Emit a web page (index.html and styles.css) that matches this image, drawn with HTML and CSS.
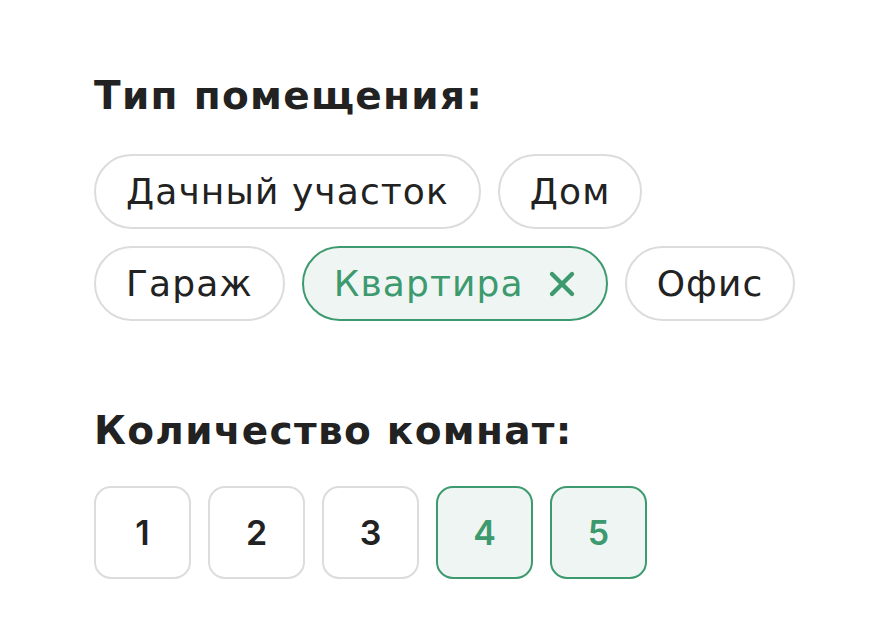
FILE: index.html
```html
<!DOCTYPE html>
<html lang="ru">
<head>
  <meta charset="UTF-8" />
  <meta name="viewport" content="width=device-width, initial-scale=1.0"/>
  <title>Фильтр</title>
  <link rel="stylesheet" href="styles.css">
</head>
<body>
  <div class="filter">
    <div class="group">
      <h2 class="group-title">Тип помещения:</h2>
      <div class="chips">
        <button class="chip">Дачный участок</button>
        <button class="chip">Дом</button>
        <button class="chip">Гараж</button>
        <button class="chip active">Квартира
          <svg class="chip-close" viewBox="0 0 28 28" width="28" height="28">
            <path d="M4 4 L24 24 M24 4 L4 24" stroke="currentColor" stroke-width="4.4" stroke-linecap="round" fill="none"/>
          </svg>
        </button>
        <button class="chip">Офис</button>
      </div>
    </div>
    <div class="group rooms">
      <h2 class="group-title">Количество комнат:</h2>
      <div class="boxes">
        <button class="box">1</button>
        <button class="box">2</button>
        <button class="box">3</button>
        <button class="box active">4</button>
        <button class="box active">5</button>
      </div>
    </div>
  </div>
</body>
</html>
```

FILE: styles.css
```css
* { box-sizing: border-box; }
html, body {
  margin: 0;
  background: #ffffff;
  color: #222222;
  font-family: "DejaVu Sans", Inter, sans-serif;
}
.filter {
  padding: 72px 0 0 94px;
}
.group-title {
  margin: 0 0 34px;
  font-size: 39px;
  font-weight: 700;
  line-height: 48px;
  letter-spacing: 1.3px;
  color: #222222;
}
.chips {
  display: flex;
  flex-wrap: wrap;
  gap: 17px;
  max-width: 720px;
}
.chip {
  display: inline-flex;
  align-items: center;
  gap: 24px;
  height: 75px;
  padding: 0 30px;
  border: 2px solid #dcdcdc;
  border-radius: 40px;
  background: #ffffff;
  color: #222222;
  font-family: inherit;
  font-size: 36px;
  font-weight: 400;
  letter-spacing: 1.1px;
  cursor: pointer;
}
.chip.active {
  border-color: #3d9a6f;
  background: #eff5f2;
  color: #3d9a6f;
}
.chip-close { display: block; }
.rooms { margin-top: 86px; }
.rooms .group-title { margin-bottom: 31px; }
.boxes {
  display: flex;
  gap: 17px;
}
.box {
  width: 97px;
  height: 93px;
  border: 2px solid #dcdcdc;
  border-radius: 17px;
  background: #ffffff;
  color: #222222;
  font-family: Inter, "DejaVu Sans", sans-serif;
  font-size: 34px;
  font-weight: 600;
  cursor: pointer;
}
.box.active {
  border-color: #3d9a6f;
  background: #eff5f2;
  color: #3d9a6f;
}
```
